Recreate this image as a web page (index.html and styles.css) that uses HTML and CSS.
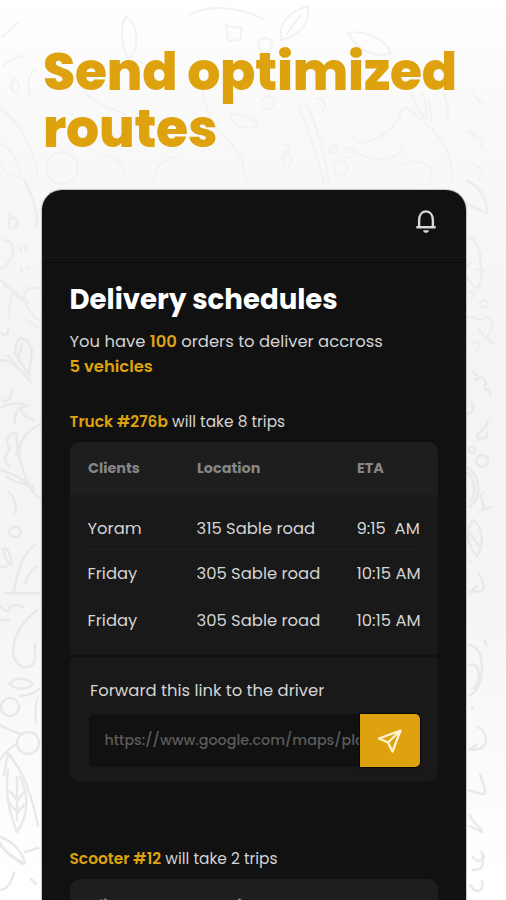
FILE: index.html
```html
<!DOCTYPE html>
<html lang="en">
<head>
    <meta charset="UTF-8">
    <meta name="viewport" content="width=device-width, initial-scale=1.0">
    <title>Send optimized routes</title>
    <link rel="stylesheet" href="styles.css">
</head>
<body>
    <!-- food doodles behind the page -->
    <svg class="doodles" viewBox="0 0 506 900" aria-hidden="true">
        <g class="faint">
            <path d="M126 16c-7 10-4 34 3 43 9-9 12-31-3-43M137 60c14 10 28 7 35 15M190 15c20-12 52-7 73 4M226 24c6 5 10 2 16 4l-2 12-12 1zM281 40c-3-18 8-28 27-34 2 17-7 29-27 34M287 34l14-20"/>
            <path d="M348 33c19-3 37 7 43 20-14 5-30 1-43-20M18 23l-16 14M3 65c6-4 12-8 20-9M15 79c8 8 3 15-1 13s-3-11 1-13M33 70c-5 10-7 19-2 27M84 90c8 13 26 18 41 24M0 108c19 13 34 38 38 70M0 143c12 5 20 23 20 35-14-2-18-10-20-16"/>
            <path d="M202 90c5 24 12 36 30 55 12 14 12 25 15 40M230 116c8-5 22 0 28 10-10 4-22 3-28-10M298 105c8 19 20 50 27 82M307 104c9 21 17 48 22 78M262 101c3-7 12-6 12 1s-9 10-12 4M316 99c8-2 12 6 7 12M283 144c8 0 6 8 1 9 9 0 11 12 3 12-5 0-6-8-2-11"/>
            <circle cx="62" cy="168" r="16"/><circle cx="265" cy="45" r="7"/><circle cx="333" cy="149" r="4"/><circle cx="349" cy="153" r="5"/><circle cx="341" cy="168" r="7"/>
            <path d="M104 155c14 3 22 12 20 22M154 187c-2-20 10-30 24-30M355 152c21 12 42 10 49-6M358 143c19-2 35-12 42-27 0-8 6-11 11-5 23 17 42 36 42 70M403 166c10-8 24-4 28 4 4 9-3 17-9 14M412 94c4 14 8 20 14 26 1-14 0-19-4-27M428 98c3 10 4 17 3 24M444 94c3 11 7 20 2 28M472 90c3 8 9 13 11 12M468 132c6 2 10 7 15 6l-2 9M470 162l13 7-5 11"/>
        </g>
        <g class="mid upper">
            <path d="M24 180c8 12 13 30 13 46M10 214c-2 14-2 16 4 14 7-3 3-13-4-10M4 240c8 0 13 10 6 20-3 5-6 8-10 8M21 247v4M26 246v4M21 268l1 4M27 267l1 3M0 280c9 4 17 16 28 23M4 284l16 15M40 288c-14-2-18 4-15 14 3 7 6 12 14 18M12 293c-1 14-6 22-2 24M28 321l10 6"/>
            <path d="M467 181c15 6 20 20 20 32-11-4-16-6-20-10M470 237c8 6 12 19 10 25 3 8 1 18-1 25-4 3-8-3-12-10M468 266l3-3M477 270c4-3 9 0 5 3M470 292c4-4 6 2 2 5M481 303c4-6 9-1 5 4h-5M468 317c8 0 12 5 15 2 4-5 11 2 10 8-4 6-9 10 1 17-10-5-11-10-15-15M473 343c7-3 9 1 4 6"/>
        </g>
        <g class="mid">
            <path d="M17 342c4-9 12-1 15 8l-3 25-14-22zM22 344l-4 16M0 360c12 0 20 10 31 22L8 356M1 333c6 4 8 0 7-5M3 400c4 4 9-2 8-9M0 408c10-6 22-5 28-2-10-1-14 8-13 18M22 408c-3 8 8 10 12 12M17 433c-10 0-12 10-7 15-4 6-8 12-1 18M17 433c-2 10 3 12-1 22M0 470c12 3 24 9 34 19M6 476c9 7 15 7 27 10M40 424c-19 10-25 24-18 42 4 16 8 26 19 33M8 492c8 4 8 16 7 21"/>
            <ellipse cx="15" cy="532" rx="6" ry="5"/>
            <path d="M3 549c5-4 8 8 9 16-8-4-8-14-9-16M0 567c4 0 8 1 10-3M35 545c-15 11-17 27-21 46M37 567c-7 4-10 10-12 16M5 593h34M0 606c7 8 8 5 10 2 0-4 8-4 13-1M0 620h9M37 610c-21 17-24 31-24 43 2 18 23 18 22 4v-13"/>
            <path d="M9 684c7-8 18-6 24 0-8 7-16 6-24 0M20 696c9 0 14-3 19-7M38 698c-4 7-2 17-2 24M0 725c9 5 15 8 23 9M0 760c5-8 10-12 15-15M4 775l4-22 6 8"/>
            <circle cx="10" cy="707" r="9"/><circle cx="28" cy="743" r="11"/>
            <path d="M8 755c16 14 25 46 30 71M8 770c-3 20 0 40 9 62 12-17 12-37 3-55M17 777v43M17 800l-7-9M18 800l6-8M17 812l-8-10M18 812l6-7M0 837c12 4 22 14 25 26-13-4-19-10-25-20M0 846l22 18M25 852l13-4M14 873c-3 10-8 17-14 17M31 879l5 5"/>
            <path d="M473 372l3 3M476 380c6-6 12 1 9 6M485 389c5 0 6 3 5 7M468 414c7-2 5-10 3-12M488 422c-5 12-12 8-10 18M477 435c2 6 10 5 11-4"/>
            <circle cx="472" cy="450" r="3"/><circle cx="482" cy="461" r="6"/>
            <path d="M467 467c15 9 14 34 2 40M483 492c-7 8 5 10-1 18l8-3M473 520c-9 14-4 27 4 36 8-11 6-29-4-36M470 533l9 13M471 562l1 1M479 574c7 12 5 20-1 17l-8 1 7-6"/>
            <path d="M467 472c9 8 9 22 3 30M484 640c2 2 1 4 3 6M470 645c10 2 14 16 11 32-1 8-5 16-11 18M470 665c9-3 12 12 4 24M472 707l1 1M478 727c10 5 11 20 0 22l-9 1 7-5M480 775c5 12 7 20 2 19l-14-4M470 815c3 10 12 12 12 17l-12-6M473 857c4 8 17 2 8-5M482 856c3 12-2 14-9 14M470 885c6 10 14 6 12-4"/>
        </g>
    </svg>

    <h1>Send optimized<br>routes</h1>

    <div class="phone">
        <div class="topbar">
            <svg class="bell" viewBox="0 0 24 26">
                <path d="M4.500 19V12C4.500 6 7.500 2 12 2S19.500 6 19.500 12V19M1.500 19.300H22.500"/>
                <path class="clapper" d="M8.800 22.500H15.200C14.800 24.500 13.600 25.300 12 25.300S9.200 24.500 8.800 22.500Z"/>
            </svg>
        </div>

        <div class="content">
            <h2>Delivery schedules</h2>
            <p class="summary">You have <b>100</b> orders to deliver accross<br><b>5 vehicles</b></p>

            <p class="trips"><b>Truck #276b</b> will take 8 trips</p>
            <div class="card">
                <div class="row head">
                    <span>Clients</span><span>Location</span><span>ETA</span>
                </div>
                <div class="rows">
                    <div class="row first">
                        <span>Yoram</span><span>315 Sable road</span><span>9:15&nbsp; AM</span>
                    </div>
                    <div class="row">
                        <span>Friday</span><span>305 Sable road</span><span>10:15 AM</span>
                    </div>
                    <div class="row">
                        <span>Friday</span><span>305 Sable road</span><span>10:15 AM</span>
                    </div>
                </div>
            </div>
            <div class="forward">
                <p>Forward this link to the driver</p>
                <div class="link">
                    <span class="url">https://www.google.com/maps/place</span>
                    <button type="button" aria-label="Send">
                        <svg viewBox="0 0 24 24">
                            <path d="M22.500 1.500L1 9.500L10 13.500L14.500 22.500ZM10 13.500L22.500 1.500"/>
                        </svg>
                    </button>
                </div>
            </div>

            <p class="trips second"><b>Scooter #12</b> will take 2 trips</p>
            <div class="card">
                <div class="row head">
                    <span>Clients</span><span>Location</span><span>ETA</span>
                </div>
            </div>
        </div>
    </div>
</body>
</html>
```
FILE: styles.css
```css
* {
    box-sizing: border-box;
}
body {
    margin: 0;
    height: 900px;
    overflow: hidden;
    position: relative;
    display: flex;
    flex-direction: column;
    font-family: Poppins, Inter, "Liberation Sans", sans-serif;
    background: linear-gradient(#fff, #f9f9f9 12%, #f4f4f4 40%, #f5f5f5 68%, #fff 98%);
}
h1, h2, p {
    margin: 0;
    white-space: nowrap;
}
.doodles {
    position: absolute;
    left: 0;
    top: 0;
    width: 506px;
    height: 900px;
    z-index: -1;
    fill: none;
    stroke-linecap: round;
    stroke-linejoin: round;
}
.faint {
    stroke: #f2f2f2;
    stroke-width: 2;
}
.mid {
    stroke: #e9e9e9;
    stroke-width: 2.5;
}
.upper {
    stroke: #ededed;
}
h1 {
    height: 190px;
    padding: 43px 0 0 43px;
    flex: none;
    font-size: 52px;
    line-height: 57px;
    font-weight: 800;
    letter-spacing: -0.2px;
    color: #dda20e;
}
.phone {
    width: 423.5px;
    height: 740px;
    flex: none;
    margin-left: 42px;
    border-radius: 20px;
    background: #111;
    box-shadow: 0 0 1px 1px #9998;
    color: #d4d4d4;
    overflow: hidden;
}
.topbar {
    height: 68px;
    display: flex;
    justify-content: flex-end;
    padding: 19px 28.5px 0 0;
    border-bottom: 1px solid #1a1a1a;
}
.bell {
    width: 22px;
    height: 25px;
    fill: none;
    stroke: #d8d8d8;
    stroke-width: 2.6;
}
.bell .clapper {
    fill: #d8d8d8;
    stroke: none;
}
.content {
    padding: 24px 27.5px 0;
}
h2 {
    font-size: 27.6px;
    line-height: 36px;
    font-weight: 700;
    color: #fff;
}
b {
    font-weight: 600;
    color: #dda20e;
}
.summary {
    margin-top: 11px;
    font-size: 16.4px;
    line-height: 25px;
}
.trips {
    margin-top: 32px;
    height: 22px;
    font-size: 15.4px;
    line-height: 22px;
}
.card {
    margin-top: 9px;
    border-radius: 10px 10px 0 0;
    background: #191919;
    overflow: hidden;
}
.row {
    display: grid;
    grid-template-columns: 109px 160px 1fr;
    align-items: center;
    white-space: nowrap;
}
.head {
    height: 53px;
    padding-left: 18.5px;
    font-size: 14.4px;
    font-weight: 700;
    color: #868686;
    background: #1e1e1e;
}
.rows {
    height: 160px;
    padding: 11px 18px 0;
    font-size: 16.4px;
}
.rows .row {
    height: 47px;
}
.rows .first {
    height: 44px;
    padding-top: 1px;
    border-bottom: 1px solid #202020;
}
.forward {
    height: 125px;
    margin-top: 2px;
    padding: 22px 18px 0 19px;
    border-radius: 4px 4px 10px 10px;
    background: #191919;
}
.forward p {
    padding-left: 1.5px;
    font-size: 16.4px;
    line-height: 24px;
}
.link {
    display: flex;
    height: 53px;
    margin-top: 11px;
    border-radius: 6px;
    background: #111;
}
.url {
    flex: 1;
    min-width: 0;
    overflow: hidden;
    padding-left: 16px;
    font-size: 14.3px;
    font-weight: 500;
    line-height: 53px;
    white-space: nowrap;
    color: #5c5c5c;
}
.link button {
    width: 60px;
    flex: none;
    padding: 0;
    border: 0;
    border-radius: 0 5px 5px 0;
    background: #dda20e;
    box-shadow: 0 0 1px 1px #090909;
}
.link svg {
    display: block;
    width: 24px;
    height: 24px;
    margin: 0 auto;
    fill: none;
    stroke: #fff3d2;
    stroke-width: 2.3;
    stroke-linejoin: round;
}
.second {
    margin-top: 66px;
}
```
